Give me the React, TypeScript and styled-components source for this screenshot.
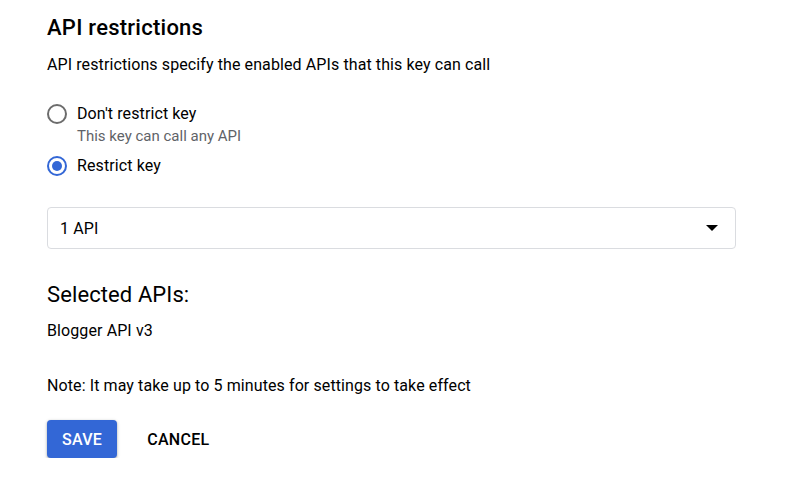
import * as React from 'react';
import styled, { createGlobalStyle } from 'styled-components';

const GlobalStyle = createGlobalStyle`
  body {
    margin: 0;
    background: #fff;
    font-family: Roboto, "Liberation Sans", sans-serif;
    color: #000;
    letter-spacing: 0.1px;
  }
`;

const Page = styled.div`
  padding: 14px 47px 0;
  width: 689px;
`;

const Title = styled.h2`
  margin: 0;
  font-size: 22px;
  font-weight: 500;
  line-height: 28px;
  letter-spacing: 0.25px;
  color: #000;
`;

const Description = styled.p`
  margin: 11px 0 0;
  font-size: 16px;
  line-height: 24px;
`;

const RadioGroup = styled.div`
  margin-top: 25px;
  display: flex;
  flex-direction: column;
`;

const RadioRow = styled.label`
  display: flex;
  align-items: flex-start;
  gap: 10px;
  cursor: pointer;
  & + & {
    margin-top: 8px;
  }
`;

const RadioCircle = styled.span<{ checked: boolean }>`
  box-sizing: border-box;
  width: 20px;
  height: 20px;
  border-radius: 50%;
  border: 2px solid ${p => (p.checked ? '#3367d6' : '#6c6c6c')};
  display: flex;
  align-items: center;
  justify-content: center;
  flex-shrink: 0;
  margin-top: 2px;
  &::after {
    content: '';
    width: 10px;
    height: 10px;
    border-radius: 50%;
    background: ${p => (p.checked ? '#3367d6' : 'transparent')};
  }
`;

const RadioText = styled.div`
  display: flex;
  flex-direction: column;
`;

const RadioLabel = styled.span`
  font-size: 16px;
  line-height: 24px;
`;

const RadioHint = styled.span`
  font-size: 15px;
  line-height: 20px;
  letter-spacing: 0;
  color: #5f6368;
`;

const Select = styled.div`
  margin-top: 29px;
  box-sizing: border-box;
  height: 42px;
  border: 1px solid #dadce0;
  border-radius: 4px;
  display: flex;
  align-items: center;
  justify-content: space-between;
  padding: 0 17px 0 12px;
  font-size: 16px;
`;

const Caret = styled.span`
  width: 0;
  height: 0;
  border-left: 6px solid transparent;
  border-right: 6px solid transparent;
  border-top: 6px solid #000;
`;

const Subtitle = styled.h3`
  margin: 32px 0 0;
  font-size: 22px;
  font-weight: 400;
  line-height: 28px;
`;

const Body = styled.p<{ gap: number }>`
  margin: ${p => p.gap}px 0 0;
  font-size: 16px;
  line-height: 24px;
`;

const Actions = styled.div`
  margin-top: 22px;
  display: flex;
  align-items: center;
  gap: 15px;
`;

const Button = styled.button<{ primary?: boolean }>`
  font-family: inherit;
  font-size: 16px;
  font-weight: 500;
  letter-spacing: 0.3px;
  height: 38px;
  padding: 0 15px;
  border: none;
  border-radius: 4px;
  cursor: pointer;
  background: ${p => (p.primary ? '#3367d6' : 'transparent')};
  color: ${p => (p.primary ? '#fff' : '#000')};
  box-shadow: ${p =>
    p.primary ? '0 1px 2px rgba(60,64,67,0.3), 0 1px 3px 1px rgba(60,64,67,0.15)' : 'none'};
`;

export default function App() {
  return (
    <>
      <GlobalStyle />
      <Page>
        <Title>API restrictions</Title>
        <Description>API restrictions specify the enabled APIs that this key can call</Description>
        <RadioGroup>
          <RadioRow>
            <RadioCircle checked={false} />
            <RadioText>
              <RadioLabel>Don't restrict key</RadioLabel>
              <RadioHint>This key can call any API</RadioHint>
            </RadioText>
          </RadioRow>
          <RadioRow>
            <RadioCircle checked />
            <RadioText>
              <RadioLabel>Restrict key</RadioLabel>
            </RadioText>
          </RadioRow>
        </RadioGroup>
        <Select>
          <span>1 API</span>
          <Caret />
        </Select>
        <Subtitle>Selected APIs:</Subtitle>
        <Body gap={10}>Blogger API v3</Body>
        <Body gap={31}>Note: It may take up to 5 minutes for settings to take effect</Body>
        <Actions>
          <Button primary>SAVE</Button>
          <Button>CANCEL</Button>
        </Actions>
      </Page>
    </>
  );
}
